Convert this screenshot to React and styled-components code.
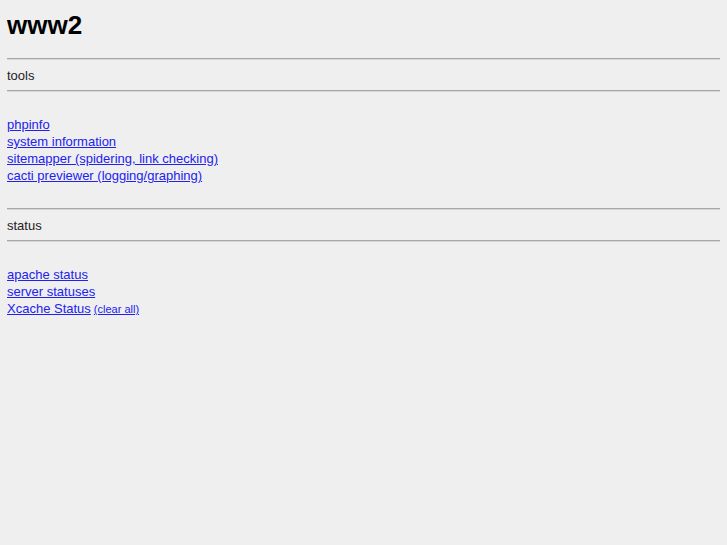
import React from "react";
import styled, { createGlobalStyle } from "styled-components";

const Global = createGlobalStyle`
  html, body { margin: 0; padding: 0; background: #efefef; }
  body { font-family: "Liberation Sans", Arial, sans-serif; color: #222; }
`;

const Page = styled.div`
  display: flex;
  flex-direction: column;
  padding: 10px 7px 0 7px;
`;

const Title = styled.h1`
  margin: 0;
  font-size: 26px;
  line-height: 30px;
  font-weight: bold;
  color: #000;
`;

const Rule = styled.hr`
  margin: ${(p) => p.$top || 0}px 0 0 0;
  height: 0;
  border: 0;
  border-top: 1px solid #a8a8a8;
  border-bottom: 1px solid #d6d6d6;
`;

const Label = styled.div`
  margin: 7px 0 6px;
  font-size: 13px;
  line-height: 17px;
  color: #222;
`;

const LinkList = styled.div`
  display: flex;
  flex-direction: column;
  align-items: flex-start;
  margin-top: 24px;
  font-size: 13px;
  line-height: 17px;
`;

const Row = styled.div`
  display: flex;
  align-items: baseline;
  gap: 2px;
`;

const Link = styled.a`
  color: #2222ee;
  text-decoration: underline;
  font-size: ${(p) => (p.$small ? "11px" : "13px")};
  padding-right: 1px;
  white-space: pre;
`;

const sections = [
  {
    label: "tools",
    top: 18,
    links: [
      ["phpinfo"],
      ["system information"],
      ["sitemapper (spidering, link checking)"],
      ["cacti previewer (logging/graphing)"],
    ],
  },
  {
    label: "status",
    top: 24,
    links: [
      ["apache status"],
      ["server statuses"],
      ["Xcache Status", "(clear all)"],
    ],
  },
];

export default function App() {
  return (
    <>
      <Global />
      <Page>
        <Title>www2</Title>
        {sections.map((s) => (
          <React.Fragment key={s.label}>
            <Rule $top={s.top} />
            <Label>{s.label}</Label>
            <Rule />
            <LinkList>
              {s.links.map(([main, extra]) => (
                <Row key={main}>
                  <Link href="#">{main}</Link>
                  {extra && (
                    <Link href="#" $small>
                      {extra}
                    </Link>
                  )}
                </Row>
              ))}
            </LinkList>
          </React.Fragment>
        ))}
      </Page>
    </>
  );
}
